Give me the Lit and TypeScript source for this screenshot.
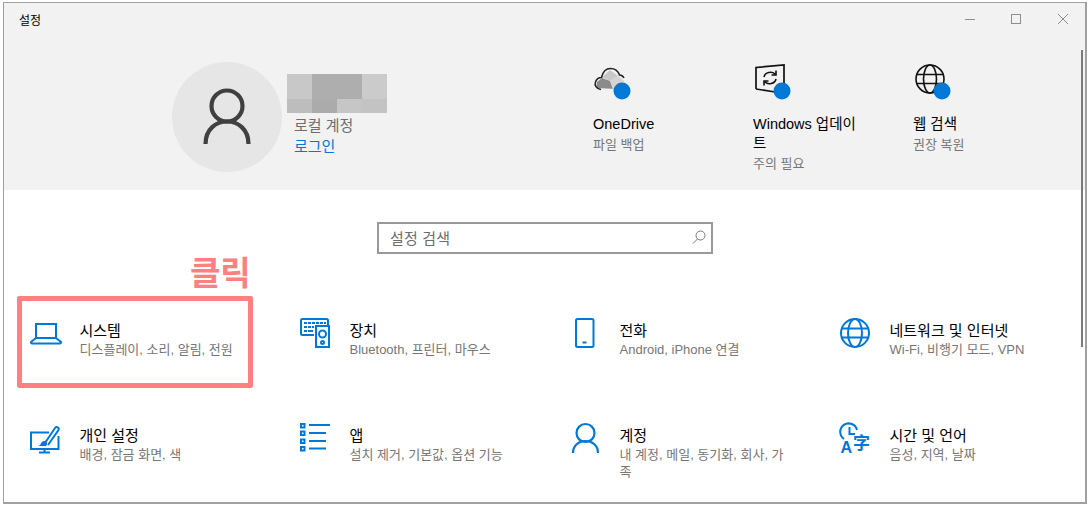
import { LitElement, html, css, svg } from 'lit';
import { customElement } from 'lit/decorators.js';

const dot = svg`<circle cx="29" cy="27" r="8.5" fill="#0078d7"/>`;

const heroIcons = {
  cloud: svg`
    <path d="M9 13 L17 6 L25 12 L17 17 Z" fill="#c8c8c8"/>
    <path d="M4 24 L4 18 L9 14 L17 17 L23 25 Z" fill="#8a8a8a"/>
    <path d="M17 17 L25 12 L31 17 L28 27 L20 26 Z" fill="#d4d4d4"/>
    <path d="M8 25.500 C3 25 1.500 21 2.500 18 C3.500 15 6 13.500 8.500 13.500 C10 7 14 4.500 17.500 4.500 C22 4.500 25 7 26.500 11 C28 11 30 12 31 14" fill="none" stroke="#222" stroke-width="1.600"/>`,
  update: svg`
    <path d="M3 25 V3.500 L31 1 V20 M3 25 L22 28" fill="none" stroke="#111" stroke-width="1.700"/>
    <path d="M11 13 C12 8 19 7 22 10 M23 6.500 V11 H18.500" fill="none" stroke="#111" stroke-width="1.600"/>
    <path d="M23 15 C22 20 15 21 12 18 M11 21.500 V17 H15.500" fill="none" stroke="#111" stroke-width="1.600"/>`,
  globe: svg`
    <g fill="none" stroke="#111" stroke-width="1.600">
      <circle cx="17" cy="15" r="14"/>
      <ellipse cx="17" cy="15" rx="6.500" ry="14"/>
      <path d="M3.500 10.500 H30.500 M3.500 19.500 H30.500"/>
    </g>`,
};

const tileIcons = {
  laptop: svg`
    <g fill="none" stroke="#0078d7" stroke-width="2">
      <rect x="6" y="6" width="20" height="14"/>
      <path d="M6 20 L1 24 C1 25 1.500 25.500 2 25.500 H30 C30.500 25.500 31 25 31 24 L26 20"/>
    </g>`,
  devices: svg`
    <g fill="none" stroke="#0078d7" stroke-width="2">
      <path d="M14 17 H2.500 C1.500 17 1 16.500 1 15.500 V2.500 C1 1.500 1.500 1 2.500 1 H26.500 C27.500 1 28 1.500 28 2.500 V7"/>
      <rect x="16" y="8" width="13" height="21"/>
      <circle cx="22.500" cy="16" r="3.500"/>
      <circle cx="22.500" cy="24.500" r="1.500"/>
    </g>
    <g fill="#0078d7">
      <path d="M4 4h3v2H4zM8 4h3v2H8zM12 4h3v2h-3zM16 4h3v2h-3zM20 4h3v2h-3zM24 4h2v2h-2z"/>
      <path d="M4 8h3v2H4zM8 8h3v2H8zM12 8h2v2h-2z"/>
      <path d="M4 12h3v2H4zM8 12h5v2H8z"/>
    </g>`,
  phone: svg`
    <rect x="6" y="1" width="17.500" height="28" rx="1.500" fill="none" stroke="#0078d7" stroke-width="2"/>
    <rect x="12.500" y="23.500" width="4" height="2" fill="#0078d7"/>`,
  network: svg`
    <g fill="none" stroke="#0078d7" stroke-width="2">
      <circle cx="15" cy="15" r="14"/>
      <ellipse cx="15" cy="15" rx="7" ry="14"/>
      <path d="M1.500 10.500 H28.500 M1.500 19.500 H28.500"/>
    </g>`,
  personal: svg`
    <g fill="none" stroke="#0078d7" stroke-width="2">
      <path d="M19 9.500 H1 V26 H28.500 V13"/>
      <path d="M14.500 26 V29.500 M9 29.500 H20"/>
      <path d="M15 20 L25 5 C26.500 3 29.500 4.500 28.500 7 L18 22"/>
    </g>
    <path d="M8 23 C11 23 11 18 14 18 C17 18 18 21 16 23 Z" fill="#0078d7"/>`,
  apps: svg`
    <g fill="none" stroke="#0078d7" stroke-width="2">
      <rect x="1" y="1" width="3.500" height="3.500"/>
      <rect x="1" y="8.500" width="3.500" height="3.500"/>
      <rect x="1" y="16.500" width="3.500" height="3.500"/>
      <rect x="1" y="24" width="3.500" height="3.500"/>
      <path d="M9 2 H30 M9 10 H26 M9 18 H26 M9 25.500 H26"/>
    </g>`,
  account: svg`
    <g fill="none" stroke="#0078d7" stroke-width="2.200">
      <circle cx="15.500" cy="10" r="9"/>
      <path d="M3 30 C3 14 28 14 28 30"/>
    </g>`,
  language: svg`
    <g fill="none" stroke="#0078d7" stroke-width="2">
      <path d="M4 16 A8.500 8.500 0 1 1 17 7"/>
      <path d="M9.500 4 V11 H15"/>
    </g>
    <text x="0.500" y="30" font-family="Liberation Sans, sans-serif" font-weight="700" font-size="16" fill="#0078d7">A</text>
    <text x="13" y="26" font-family="Noto Sans CJK SC, sans-serif" font-weight="700" font-size="17" fill="#0078d7">字</text>`,
};

const heroes = [
  { icon: heroIcons.cloud, title: 'OneDrive', sub: '파일 백업', width: 160 },
  { icon: heroIcons.update, title: 'Windows 업데이트', sub: '주의 필요', width: 160 },
  { icon: heroIcons.globe, title: '웹 검색', sub: '권장 복원', width: 120 },
];

const tiles = [
  { icon: tileIcons.laptop, title: '시스템', sub: '디스플레이, 소리, 알림, 전원' },
  { icon: tileIcons.devices, title: '장치', sub: 'Bluetooth, 프린터, 마우스' },
  { icon: tileIcons.phone, title: '전화', sub: 'Android, iPhone 연결' },
  { icon: tileIcons.network, title: '네트워크 및 인터넷', sub: 'Wi-Fi, 비행기 모드, VPN' },
  { icon: tileIcons.personal, title: '개인 설정', sub: '배경, 잠금 화면, 색' },
  { icon: tileIcons.apps, title: '앱', sub: '설치 제거, 기본값, 옵션 기능' },
  { icon: tileIcons.account, title: '계정', sub: '내 계정, 메일, 동기화, 회사, 가족' },
  { icon: tileIcons.language, title: '시간 및 언어', sub: '음성, 지역, 날짜' },
];

// blurred-out user name, mosaic cells
const mosaic = ['#c8c8c8', '#aeaeae', '#aeaeae', '#cbcbcb', '#bdbdbd', '#ababab', '#c6c6c6', '#c3c3c3'];

@customElement('app-root')
export class AppRoot extends LitElement {
  static styles = css`
    :host {
      display: block;
      width: 1088px;
      height: 506px;
      background: #fff;
      padding: 2px 1px 2px 3px;
      box-sizing: border-box;
      overflow: hidden;
      font-family: 'Liberation Sans', 'Noto Sans CJK KR', sans-serif;
      color: #000;
    }
    .window {
      position: relative;
      height: 100%;
      box-sizing: border-box;
      border: 1px solid #a0a0a0;
      border-width: 1px 2px 2px 1px;
      background: #fff;
      overflow: hidden;
    }
    .header {
      height: 187px;
      background: #f2f2f2;
      display: flex;
      flex-direction: column;
    }
    .titlebar {
      height: 32px;
      display: flex;
      align-items: center;
      padding-left: 15px;
      font-size: 12px;
      flex: none;
    }
    .titlebar .name {
      flex: 1;
    }
    .controls {
      display: flex;
      margin-top: -1px;
    }
    .controls svg {
      display: block;
      width: 46px;
      height: 12px;
    }
    .hero {
      display: flex;
      flex: 1;
    }
    .user {
      display: flex;
      width: 253px;
      padding-left: 168px;
      flex: none;
    }
    .avatar {
      width: 110px;
      height: 110px;
      margin-top: 27px;
      border-radius: 50%;
      background: #e6e6e6;
      display: flex;
      align-items: center;
      justify-content: center;
      flex: none;
    }
    .user-text {
      margin: 39px 0 0 5px;
      font-size: 15px;
    }
    .mosaic {
      display: grid;
      grid-template-columns: repeat(4, 25px);
      grid-template-rows: 25px 14px;
    }
    .user-text .local {
      margin: 3px 0 0 7px;
      color: #6d6d6d;
      line-height: 20px;
    }
    .user-text .login {
      margin: 1px 0 0 7px;
      color: #0078d7;
      line-height: 20px;
    }
    .shortcuts {
      display: flex;
      padding: 29px 0 0 168px;
    }
    .shortcut svg {
      display: block;
      width: 46px;
      height: 44px;
    }
    .shortcut .title {
      font-size: 14.5px;
      line-height: 19px;
      margin-top: 7px;
      width: 110px;
      word-break: break-all;
    }
    .shortcut .sub {
      font-size: 13px;
      line-height: 17px;
      color: #767676;
      margin-top: 2px;
    }
    .search-row {
      display: flex;
      justify-content: center;
      padding: 32px 0 0 1px;
    }
    .search {
      width: 336px;
      height: 32px;
      box-sizing: border-box;
      border: 2px solid #999;
      display: flex;
      align-items: center;
      justify-content: space-between;
      padding: 0 4px 2px 11px;
      font-size: 15px;
      letter-spacing: 0.2px;
      color: #6d6d6d;
    }
    .grid {
      display: grid;
      grid-template-columns: repeat(4, 270px);
      grid-auto-rows: 105px;
      padding: 64px 0 0 26px;
    }
    .tile {
      display: flex;
      gap: 17.5px;
    }
    .tile svg {
      display: block;
      width: 32px;
      height: 32px;
      flex: none;
      overflow: visible;
    }
    .tile .title {
      font-size: 15px;
      line-height: 20px;
      margin-top: 3px;
    }
    .tile .sub {
      font-size: 13px;
      line-height: 17px;
      color: #767676;
      width: 170px;
      word-break: break-all;
    }
    .click-label {
      position: absolute;
      left: 186px;
      top: 251px;
      font-size: 33px;
      line-height: 40px;
      font-weight: 700;
      color: #ff8080;
      letter-spacing: -0.2px;
    }
    .highlight {
      position: absolute;
      left: 13px;
      top: 293px;
      width: 236px;
      height: 92px;
      box-sizing: border-box;
      border: 5px solid #ff8080;
      border-radius: 2px;
    }
    .thumb {
      position: absolute;
      right: 2px;
      top: 47px;
      width: 2px;
      height: 297px;
      background: #7a7a7a;
    }
  `;

  render() {
    return html`
      <div class="window">
        <div class="header">
          <div class="titlebar">
            <span class="name">설정</span>
            <div class="controls">
              <svg viewBox="0 0 46 12"><path d="M18 6.500 H28" stroke="#8e8e8e" fill="none"/></svg>
              <svg viewBox="0 0 46 12"><rect x="18.500" y="1.500" width="9" height="9" stroke="#8e8e8e" fill="none"/></svg>
              <svg viewBox="0 0 46 12"><path d="M19 1 L29 11 M29 1 L19 11" stroke="#8e8e8e" fill="none"/></svg>
            </div>
          </div>
          <div class="hero">
            <div class="user">
              <div class="avatar">
                <svg width="48" height="58" viewBox="0 0 48 58">
                  <g fill="none" stroke="#404040" stroke-width="4.200">
                    <circle cx="24" cy="18" r="15.500"/>
                    <path d="M2.500 56 C2.500 26 45.500 26 45.500 56"/>
                  </g>
                </svg>
              </div>
              <div class="user-text">
                <div class="mosaic">
                  ${mosaic.map((c) => html`<span style="background:${c}"></span>`)}
                </div>
                <div class="local">로컬 계정</div>
                <div class="login">로그인</div>
              </div>
            </div>
            <div class="shortcuts">
              ${heroes.map(
                (h) => html`
                  <div class="shortcut" style="width:${h.width}px">
                    <svg viewBox="0 0 46 44">${h.icon}${dot}</svg>
                    <div class="title">${h.title}</div>
                    <div class="sub">${h.sub}</div>
                  </div>
                `
              )}
            </div>
          </div>
        </div>
        <div class="search-row">
          <div class="search">
            <span>설정 검색</span>
            <svg width="16" height="16" viewBox="0 0 16 16">
              <circle cx="9.500" cy="6.500" r="4.500" fill="none" stroke="#777"/>
              <path d="M6.500 10 L2 14.500" stroke="#777" fill="none"/>
            </svg>
          </div>
        </div>
        <div class="grid">
          ${tiles.map(
            (t) => html`
              <div class="tile">
                <svg viewBox="0 0 32 32">${t.icon}</svg>
                <div>
                  <div class="title">${t.title}</div>
                  <div class="sub">${t.sub}</div>
                </div>
              </div>
            `
          )}
        </div>
        <div class="click-label">클릭</div>
        <div class="highlight"></div>
        <div class="thumb"></div>
      </div>
    `;
  }
}
